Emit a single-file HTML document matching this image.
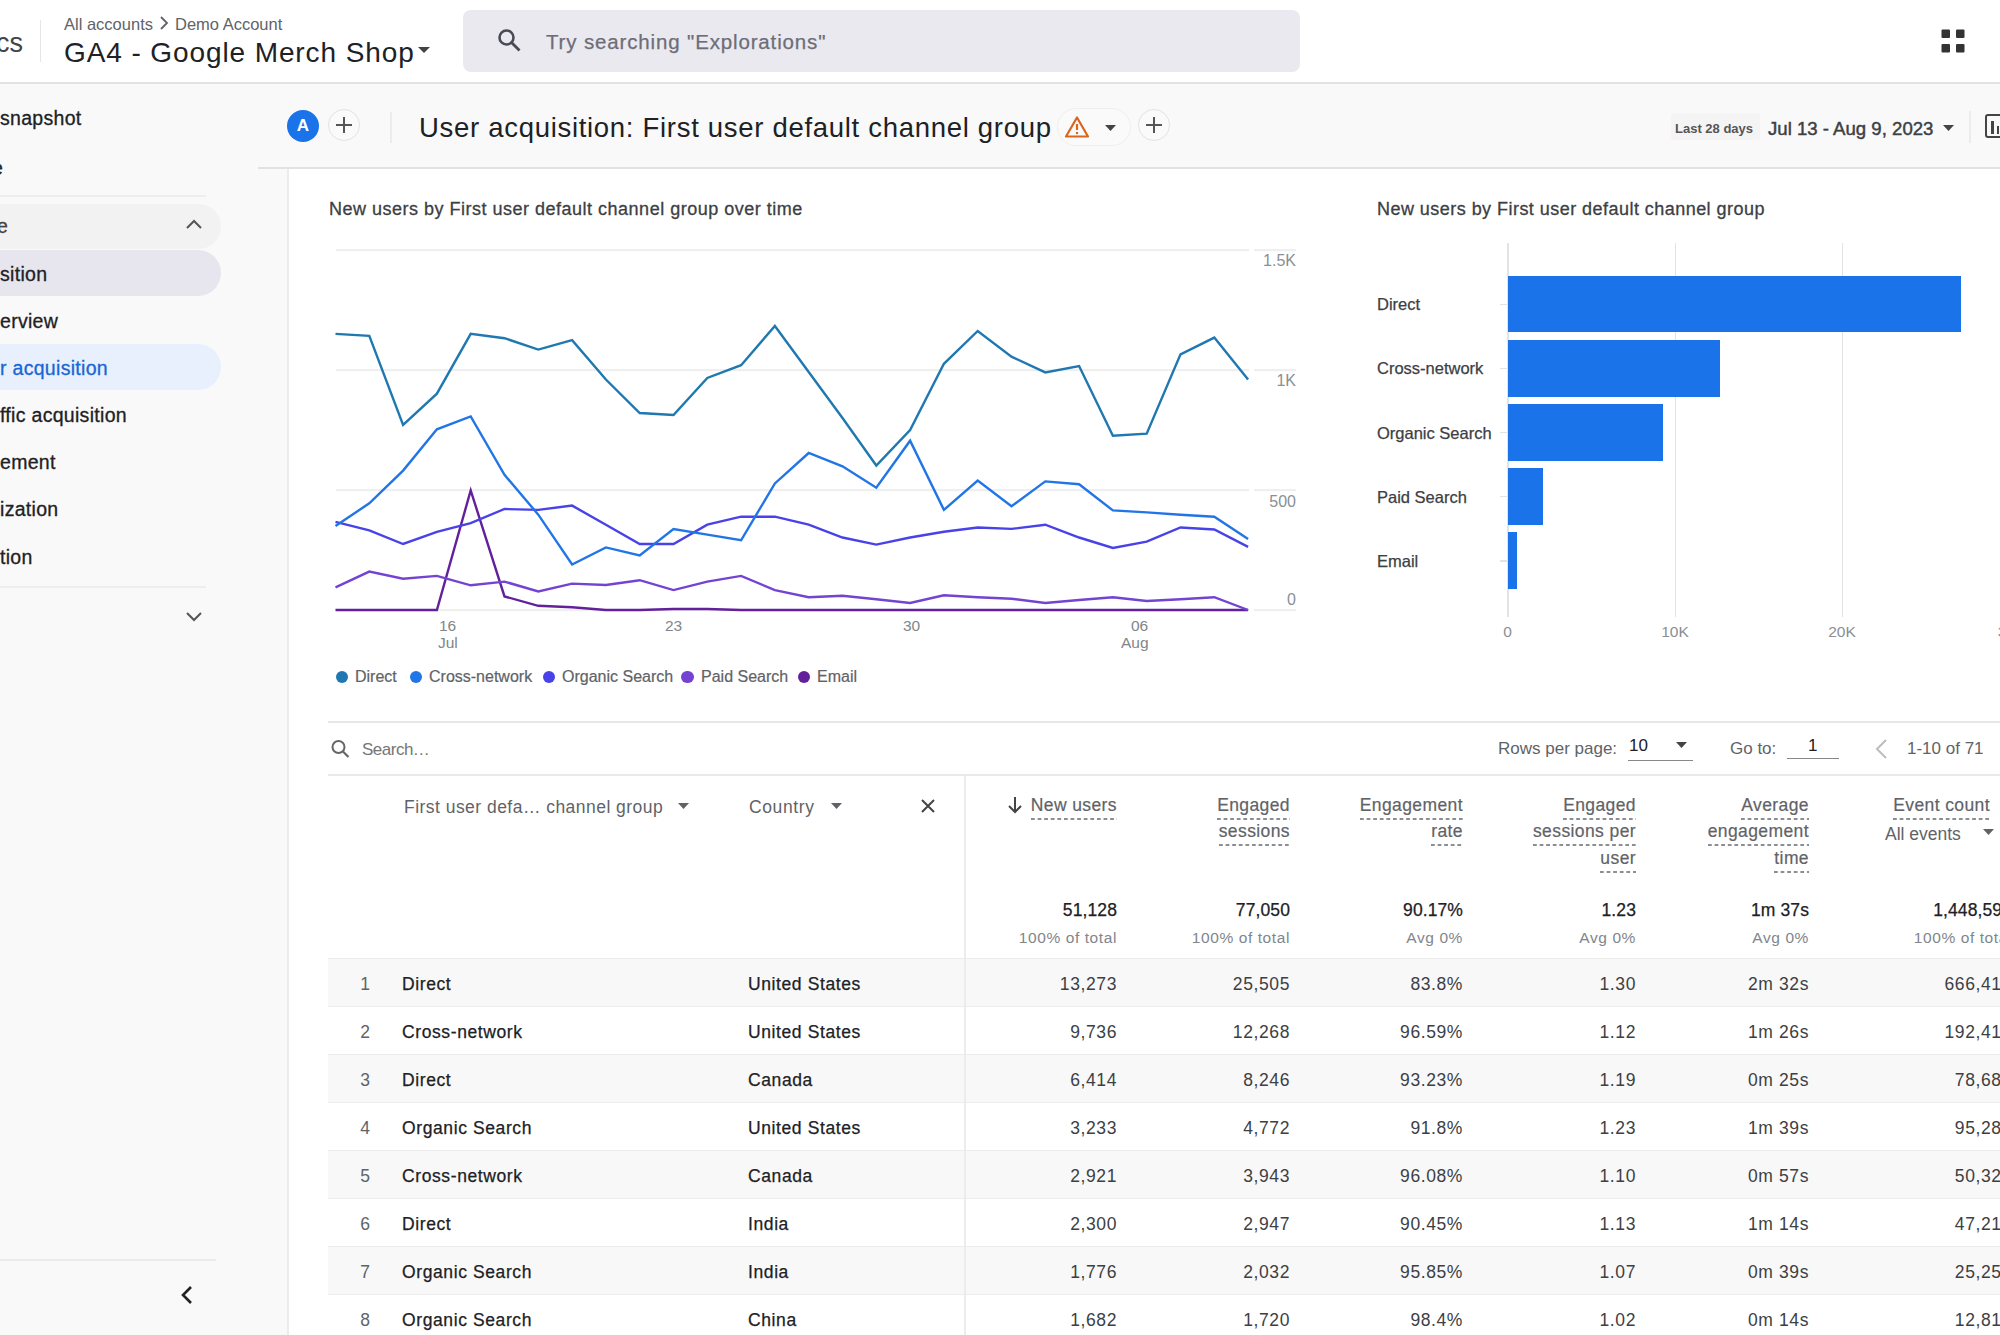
<!DOCTYPE html>
<html><head><meta charset="utf-8">
<style>
*{margin:0;padding:0;box-sizing:border-box}
html,body{width:2000px;height:1335px;overflow:hidden;background:#fff;font-family:"Liberation Sans",sans-serif;color:#202124}
.a{position:absolute;white-space:nowrap;line-height:1}
.r{text-align:right}
.m{-webkit-text-stroke:0.25px currentColor}
.th{position:absolute;white-space:nowrap;line-height:1;font-size:17.5px;color:#5f6368;text-align:right;letter-spacing:0.4px;-webkit-text-stroke:0.2px #5f6368}
.th span{background:linear-gradient(to right,#8a8f94 60%,transparent 60%) repeat-x 0 100%;background-size:6.6px 2px;padding-bottom:5px}
.cell{position:absolute;white-space:nowrap;line-height:1;font-size:17.5px;color:#202124;letter-spacing:0.6px}
</style></head><body>

<div class="a" style="left:0;top:82px;width:2000px;height:2px;background:#e2e2e2"></div>
<div class="a" style="left:-4px;top:30px;font-size:27px;color:#444">cs</div>
<div class="a" style="left:40px;top:20px;width:1px;height:42px;background:#e6e6e6"></div>
<div class="a" id="bc" style="left:64px;top:16px;font-size:16.5px;color:#5f6368">All accounts</div>
<svg class="a" style="left:158px;top:15px" width="12" height="16"><path d="M3 2 L9 8 L3 14" fill="none" stroke="#5f6368" stroke-width="1.8"/></svg>
<div class="a" id="bc2" style="left:175px;top:16px;font-size:16.5px;color:#5f6368">Demo Account</div>
<div class="a" id="prop" style="left:64px;top:39px;font-size:28px;color:#202124;letter-spacing:0.9px">GA4 - Google Merch Shop</div>
<svg class="a" style="left:417px;top:45px" width="14" height="10"><path d="M1 2 L13 2 L7 8 Z" fill="#444"/></svg>
<div class="a" style="left:463px;top:10px;width:837px;height:62px;background:#e9e9ef;border-radius:8px"></div>
<svg class="a" style="left:495px;top:26px" width="30" height="30"><circle cx="11.5" cy="11.5" r="7" fill="none" stroke="#4a4a55" stroke-width="2.6"/><path d="M16.5 16.5 L24.5 24.5" stroke="#4a4a55" stroke-width="2.8"/></svg>
<div class="a" id="ph" style="left:546px;top:32px;font-size:20.5px;color:#6d6d78;letter-spacing:0.85px;-webkit-text-stroke:0.25px #6d6d78">Try searching "Explorations"</div>
<svg class="a" style="left:1940px;top:28px" width="26" height="26"><rect x="1.5" y="1.5" width="8.5" height="8.5" rx="1" fill="#333"/><rect x="16" y="1.5" width="8.5" height="8.5" rx="1" fill="#333"/><rect x="1.5" y="16" width="8.5" height="8.5" rx="1" fill="#333"/><rect x="16" y="16" width="8.5" height="8.5" rx="1" fill="#333"/></svg>

<div class="a" style="left:0;top:84px;width:2000px;height:85px;background:#f9f9f9"></div>
<div class="a" style="left:0;top:84px;width:288px;height:1251px;background:#f9f9f9"></div>
<div class="a" style="left:258px;top:167px;width:1742px;height:2px;background:#e2e2e2"></div>
<div class="a" style="left:287px;top:169px;width:2px;height:1166px;background:#ececec"></div>

<div class="a" style="left:287px;top:110px;width:32px;height:32px;border-radius:50%;background:#1a73e8;color:#fff;font-size:17px;font-weight:bold;text-align:center;line-height:32px">A</div>
<div class="a" style="left:328px;top:109px;width:32px;height:32px;border-radius:50%;border:1.5px solid #e3e3e3;background:#fafafa"></div>
<svg class="a" style="left:334px;top:115px" width="20" height="20"><path d="M10 2 V18 M2 10 H18" stroke="#555" stroke-width="2"/></svg>
<div class="a" style="left:390px;top:112px;width:2px;height:31px;background:#ececec"></div>
<div class="a" id="title" style="left:419px;top:114px;font-size:27.5px;color:#202124;letter-spacing:0.7px">User acquisition: First user default channel group</div>
<div class="a" style="left:1057px;top:108px;width:74px;height:38px;border-radius:19px;border:1.5px solid #efefef;background:#fafafa"></div>
<svg class="a" style="left:1064px;top:115px" width="26" height="24"><path d="M13 2.5 L24 21.5 H2 Z" fill="none" stroke="#d9651f" stroke-width="2.2" stroke-linejoin="round"/><path d="M13 9 V15" stroke="#d9651f" stroke-width="2.2"/><circle cx="13" cy="18" r="1.2" fill="#d9651f"/></svg>
<svg class="a" style="left:1104px;top:124px" width="14" height="8"><path d="M1 1 H12 L6.5 7 Z" fill="#444"/></svg>
<div class="a" style="left:1138px;top:109px;width:32px;height:32px;border-radius:50%;border:1.5px solid #e3e3e3;background:#fafafa"></div>
<svg class="a" style="left:1144px;top:115px" width="20" height="20"><path d="M10 2 V18 M2 10 H18" stroke="#555" stroke-width="2"/></svg>
<div class="a" style="left:1671px;top:113px;width:89px;height:27px;background:#f4f4f4;border-radius:3px"></div>
<div class="a" id="l28" style="left:1675px;top:122px;font-size:13px;color:#555;font-weight:bold">Last 28 days</div>
<div class="a m" id="dr" style="left:1768px;top:120px;font-size:18.6px;color:#3c4043;-webkit-text-stroke:0.45px #3c4043">Jul 13 - Aug 9, 2023</div>
<svg class="a" style="left:1942px;top:124px" width="14" height="8"><path d="M1 1 H12 L6.5 7 Z" fill="#444"/></svg>
<div class="a" style="left:1969px;top:111px;width:2px;height:32px;background:#ececec"></div>
<div class="a" style="left:1985px;top:114px;width:24px;height:24px;border:2.5px solid #444;border-radius:3px"></div>
<div class="a" style="left:1991px;top:121px;width:2.5px;height:13px;background:#444"></div><div class="a" style="left:1996.5px;top:126px;width:2.5px;height:8px;background:#444"></div>

<div class="a" id="sb1" style="left:0;top:108.5px;font-size:19.5px;letter-spacing:0.3px;-webkit-text-stroke:0.3px currentColor;color:#202124">snapshot</div>
<div class="a" style="left:-8px;top:159px;font-size:19.5px;letter-spacing:0.3px;-webkit-text-stroke:0.3px currentColor;color:#202124">e</div>
<div class="a" style="left:0;top:195px;width:206px;height:2px;background:#eeeeee"></div>
<div class="a" style="left:0;top:204px;width:221px;height:45px;background:#f2f2f2;border-radius:0 23px 23px 0"></div>
<div class="a" style="left:-3px;top:216.5px;font-size:19.5px;letter-spacing:0.3px;-webkit-text-stroke:0.3px currentColor;color:#444">e</div>
<svg class="a" style="left:184px;top:217px" width="20" height="14"><path d="M3 11 L10 4 L17 11" fill="none" stroke="#555" stroke-width="2"/></svg>
<div class="a" style="left:0;top:250px;width:221px;height:46px;background:#e7e6ee;border-radius:0 23px 23px 0"></div>
<div class="a" id="sb2" style="left:0;top:265px;font-size:19.5px;letter-spacing:0.3px;-webkit-text-stroke:0.3px currentColor;color:#202124">sition</div>
<div class="a" id="sb3" style="left:0;top:312px;font-size:19.5px;letter-spacing:0.3px;-webkit-text-stroke:0.3px currentColor;color:#202124">erview</div>
<div class="a" style="left:0;top:344px;width:221px;height:46px;background:#e8f0fe;border-radius:0 23px 23px 0"></div>
<div class="a" id="sb4" style="left:0;top:359px;font-size:19.5px;letter-spacing:0.3px;-webkit-text-stroke:0.3px currentColor;color:#1967d2">r acquisition</div>
<div class="a" id="sb5" style="left:0;top:406px;font-size:19.5px;letter-spacing:0.3px;-webkit-text-stroke:0.3px currentColor;color:#202124">ffic acquisition</div>
<div class="a" id="sb6" style="left:0;top:453px;font-size:19.5px;letter-spacing:0.3px;-webkit-text-stroke:0.3px currentColor;color:#202124">ement</div>
<div class="a" id="sb7" style="left:0;top:500px;font-size:19.5px;letter-spacing:0.3px;-webkit-text-stroke:0.3px currentColor;color:#202124">ization</div>
<div class="a" id="sb8" style="left:0;top:548px;font-size:19.5px;letter-spacing:0.3px;-webkit-text-stroke:0.3px currentColor;color:#202124">tion</div>
<div class="a" style="left:0;top:586px;width:206px;height:2px;background:#eeeeee"></div>
<svg class="a" style="left:184px;top:610px" width="20" height="14"><path d="M3 3 L10 10 L17 3" fill="none" stroke="#555" stroke-width="2"/></svg>
<div class="a" style="left:0;top:1259px;width:216px;height:2px;background:#ebebeb"></div>
<svg class="a" style="left:177px;top:1284px" width="20" height="22"><path d="M14 3 L6 11 L14 19" fill="none" stroke="#222" stroke-width="2.6"/></svg>

<div class="a" id="ct1" style="left:329px;top:200px;font-size:18px;color:#3c4043;letter-spacing:0.5px;-webkit-text-stroke:0.3px #3c4043">New users by First user default channel group over time</div>
<svg class="a" style="left:0;top:0" width="2000" height="700">
<rect x="336" y="249" width="913" height="2.2" fill="#efefef"/><rect x="1254" y="249" width="42" height="2.2" fill="#efefef"/>
<rect x="336" y="369" width="913" height="2.2" fill="#efefef"/><rect x="1254" y="369" width="42" height="2.2" fill="#efefef"/>
<rect x="336" y="489" width="913" height="2.2" fill="#efefef"/><rect x="1254" y="489" width="42" height="2.2" fill="#efefef"/>
<rect x="336" y="609" width="913" height="2.2" fill="#efefef"/><rect x="1254" y="609" width="42" height="2.2" fill="#efefef"/>
<polyline points="335.5,610.0 369.3,610.0 403.1,610.0 436.9,610.0 470.7,490.5 504.5,596.4 538.3,605.8 572.1,607.2 605.9,610.0 639.7,610.0 673.5,609.0 707.3,609.0 741.1,610.0 774.9,610.0 808.7,610.0 842.5,610.0 876.3,610.0 910.1,610.0 943.9,610.0 977.7,610.0 1011.5,610.0 1045.3,610.0 1079.1,610.0 1112.9,610.0 1146.7,610.0 1180.5,610.0 1214.3,610.0 1248.1,610.0" fill="none" stroke="#62219a" stroke-width="2.4" stroke-linejoin="miter"/>
<polyline points="335.5,587.3 369.3,571.6 403.1,578.7 436.9,575.9 470.7,585.3 504.5,581.6 538.3,591.5 572.1,583.6 605.9,585.0 639.7,580.2 673.5,590.1 707.3,581.6 741.1,575.9 774.9,590.1 808.7,597.2 842.5,595.8 876.3,599.2 910.1,603.0 943.9,595.3 977.7,597.2 1011.5,598.7 1045.3,603.0 1079.1,600.0 1112.9,597.2 1146.7,601.0 1180.5,599.2 1214.3,597.2 1248.1,610.0" fill="none" stroke="#7443d2" stroke-width="2.4" stroke-linejoin="miter"/>
<polyline points="335.5,521.8 369.3,530.4 403.1,544.0 436.9,531.8 470.7,523.2 504.5,509.0 538.3,509.9 572.1,505.6 605.9,524.7 639.7,544.0 673.5,544.0 707.3,524.7 741.1,516.7 774.9,516.7 808.7,524.7 842.5,537.5 876.3,544.6 910.1,537.5 943.9,531.8 977.7,527.5 1011.5,528.9 1045.3,524.7 1079.1,537.5 1112.9,548.0 1146.7,541.7 1180.5,527.5 1214.3,529.5 1248.1,546.9" fill="none" stroke="#4842e8" stroke-width="2.4" stroke-linejoin="miter"/>
<polyline points="335.5,526.0 369.3,503.3 403.1,470.6 436.9,429.3 470.7,416.5 504.5,474.8 538.3,514.7 572.1,564.5 605.9,547.4 639.7,555.4 673.5,529.0 707.3,534.6 741.1,540.3 774.9,483.4 808.7,453.0 842.5,466.3 876.3,487.7 910.1,440.7 943.9,509.9 977.7,480.5 1011.5,506.2 1045.3,481.4 1079.1,484.2 1112.9,510.4 1146.7,512.4 1180.5,514.7 1214.3,516.7 1248.1,538.9" fill="none" stroke="#2275e6" stroke-width="2.4" stroke-linejoin="miter"/>
<polyline points="335.5,333.9 369.3,335.9 403.1,425.0 436.9,393.7 470.7,333.9 504.5,338.2 538.3,349.6 572.1,340.2 605.9,379.5 639.7,413.0 673.5,415.0 707.3,378.0 741.1,365.2 774.9,326.0 808.7,372.0 842.5,418.0 876.3,465.5 910.1,430.0 943.9,363.8 977.7,331.0 1011.5,356.7 1045.3,372.4 1079.1,366.1 1112.9,435.8 1146.7,433.6 1180.5,354.4 1214.3,337.6 1248.1,379.5" fill="none" stroke="#1f78b0" stroke-width="2.4" stroke-linejoin="miter"/>
</svg>
<div class="a r" id="ya254" style="left:1196px;width:100px;top:253px;font-size:16px;color:#8a8f94">1.5K</div>
<div class="a r" id="ya374" style="left:1196px;width:100px;top:373px;font-size:16px;color:#8a8f94">1K</div>
<div class="a r" id="ya495" style="left:1196px;width:100px;top:494px;font-size:16px;color:#8a8f94">500</div>
<div class="a r" id="ya593" style="left:1196px;width:100px;top:592px;font-size:16px;color:#8a8f94">0</div>
<div class="a" id="xa1" style="left:439px;top:617.5px;font-size:15.5px;color:#80868b">16</div>
<div class="a" id="xa2" style="left:438px;top:634.5px;font-size:15.5px;color:#80868b">Jul</div>
<div class="a" id="xa3" style="left:665px;top:617.5px;font-size:15.5px;color:#80868b">23</div>
<div class="a" id="xa4" style="left:903px;top:617.5px;font-size:15.5px;color:#80868b">30</div>
<div class="a" id="xa5" style="left:1131px;top:617.5px;font-size:15.5px;color:#80868b">06</div>
<div class="a" id="xa6" style="left:1121px;top:634.5px;font-size:15.5px;color:#80868b">Aug</div>

<div class="a" style="left:335.8px;top:670.8px;width:12.4px;height:12.4px;border-radius:50%;background:#1f78b0"></div>
<div class="a" id="lg0" style="left:355px;top:669px;font-size:16px;color:#5f6368;-webkit-text-stroke:0.2px #5f6368">Direct</div>
<div class="a" style="left:409.8px;top:670.8px;width:12.4px;height:12.4px;border-radius:50%;background:#2275e6"></div>
<div class="a" id="lg1" style="left:429px;top:669px;font-size:16px;color:#5f6368;-webkit-text-stroke:0.2px #5f6368">Cross-network</div>
<div class="a" style="left:542.8px;top:670.8px;width:12.4px;height:12.4px;border-radius:50%;background:#4842e8"></div>
<div class="a" id="lg2" style="left:562px;top:669px;font-size:16px;color:#5f6368;-webkit-text-stroke:0.2px #5f6368">Organic Search</div>
<div class="a" style="left:681.3px;top:670.8px;width:12.4px;height:12.4px;border-radius:50%;background:#7443d2"></div>
<div class="a" id="lg3" style="left:701px;top:669px;font-size:16px;color:#5f6368;-webkit-text-stroke:0.2px #5f6368">Paid Search</div>
<div class="a" style="left:797.8px;top:670.8px;width:12.4px;height:12.4px;border-radius:50%;background:#62219a"></div>
<div class="a" id="lg4" style="left:817px;top:669px;font-size:16px;color:#5f6368;-webkit-text-stroke:0.2px #5f6368">Email</div>
<div class="a" id="ct2" style="left:1377px;top:200px;font-size:18px;color:#3c4043;letter-spacing:0.46px;-webkit-text-stroke:0.3px #3c4043">New users by First user default channel group</div>
<div class="a" style="left:1507px;top:243px;width:1.5px;height:374px;background:#e3e3e3"></div>
<div class="a" style="left:1674.5px;top:243px;width:1.5px;height:374px;background:#e3e3e3"></div>
<div class="a" style="left:1841.5px;top:243px;width:1.5px;height:374px;background:#e3e3e3"></div>
<div class="a" style="left:1507.5px;top:275.6px;width:453.0px;height:56.8px;background:#1a73e8"></div>
<div class="a" style="left:1500px;top:303.6px;width:7px;height:1.2px;background:#e3e3e3"></div>
<div class="a" id="bl0" style="left:1377px;top:296.1px;font-size:16.5px;color:#3c4043;-webkit-text-stroke:0.25px #3c4043">Direct</div>
<div class="a" style="left:1507.5px;top:339.8px;width:212.8px;height:56.8px;background:#1a73e8"></div>
<div class="a" style="left:1500px;top:367.8px;width:7px;height:1.2px;background:#e3e3e3"></div>
<div class="a" id="bl1" style="left:1377px;top:360.3px;font-size:16.5px;color:#3c4043;-webkit-text-stroke:0.25px #3c4043">Cross-network</div>
<div class="a" style="left:1507.5px;top:404.0px;width:155.3px;height:56.8px;background:#1a73e8"></div>
<div class="a" style="left:1500px;top:432.0px;width:7px;height:1.2px;background:#e3e3e3"></div>
<div class="a" id="bl2" style="left:1377px;top:424.5px;font-size:16.5px;color:#3c4043;-webkit-text-stroke:0.25px #3c4043">Organic Search</div>
<div class="a" style="left:1507.5px;top:468.2px;width:35.2px;height:56.8px;background:#1a73e8"></div>
<div class="a" style="left:1500px;top:496.2px;width:7px;height:1.2px;background:#e3e3e3"></div>
<div class="a" id="bl3" style="left:1377px;top:488.7px;font-size:16.5px;color:#3c4043;-webkit-text-stroke:0.25px #3c4043">Paid Search</div>
<div class="a" style="left:1507.5px;top:532.4px;width:9.3px;height:56.8px;background:#1a73e8"></div>
<div class="a" style="left:1500px;top:560.4px;width:7px;height:1.2px;background:#e3e3e3"></div>
<div class="a" id="bl4" style="left:1377px;top:552.9px;font-size:16.5px;color:#3c4043;-webkit-text-stroke:0.25px #3c4043">Email</div>
<div class="a" style="left:1467.5px;width:80px;text-align:center;top:623.5px;font-size:15.5px;color:#8a8f94">0</div>
<div class="a" style="left:1635px;width:80px;text-align:center;top:623.5px;font-size:15.5px;color:#8a8f94">10K</div>
<div class="a" style="left:1802px;width:80px;text-align:center;top:623.5px;font-size:15.5px;color:#8a8f94">20K</div>
<div class="a" style="left:1962px;width:80px;text-align:center;top:623.5px;font-size:15.5px;color:#8a8f94">3</div>
<div class="a" style="left:328px;top:721px;width:1672px;height:1.6px;background:#e6e6e6"></div>
<svg class="a" style="left:328px;top:736px" width="26" height="26"><circle cx="10.5" cy="11" r="6" fill="none" stroke="#666" stroke-width="2"/><path d="M15 15.5 L20.5 21" stroke="#666" stroke-width="2.2"/></svg>
<div class="a" id="srch" style="left:362px;top:741px;font-size:17px;letter-spacing:-0.5px;color:#757575">Search…</div>
<div class="a" id="rpp" style="left:1498px;top:740px;font-size:17px;color:#5f6368">Rows per page:</div>
<div class="a" style="left:1629px;top:737px;font-size:17px;color:#202124">10</div>
<svg class="a" style="left:1675px;top:741px" width="14" height="8"><path d="M1 1 H12 L6.5 7 Z" fill="#444"/></svg>
<div class="a" style="left:1628px;top:760px;width:65px;height:1.3px;background:#888"></div>
<div class="a" id="goto" style="left:1730px;top:740px;font-size:17px;color:#5f6368">Go to:</div>
<div class="a" style="left:1808px;top:737px;font-size:17px;color:#202124">1</div>
<div class="a" style="left:1787px;top:758px;width:52px;height:1.3px;background:#888"></div>
<svg class="a" style="left:1872px;top:738px" width="18" height="22"><path d="M14 2 L5 11 L14 20" fill="none" stroke="#bdbdbd" stroke-width="2"/></svg>
<div class="a" id="pg" style="left:1907px;top:740px;font-size:17px;color:#5f6368">1-10 of 71</div>
<div class="a" style="left:328px;top:774px;width:1672px;height:1.6px;background:#e9e9e9"></div>
<div class="a" style="left:964px;top:775px;width:2px;height:560px;background:#ececec"></div>
<div class="a" id="h1" style="left:404px;top:799px;font-size:17.5px;color:#5f6368;letter-spacing:0.47px">First user defa… channel group</div>
<svg class="a" style="left:677px;top:802px" width="14" height="8"><path d="M1 1 H12 L6.5 7 Z" fill="#5f6368"/></svg>
<div class="a" id="h2" style="left:749px;top:799px;font-size:17.5px;color:#5f6368;letter-spacing:0.6px">Country</div>
<svg class="a" style="left:830px;top:802px" width="14" height="8"><path d="M1 1 H12 L6.5 7 Z" fill="#5f6368"/></svg>
<svg class="a" style="left:920px;top:798px" width="16" height="16"><path d="M2 2 L14 14 M14 2 L2 14" stroke="#444" stroke-width="2"/></svg>
<svg class="a" style="left:1006px;top:795px" width="18" height="20"><path d="M9 2 V17 M3 11 L9 17 L15 11" fill="none" stroke="#444" stroke-width="2"/></svg>
<div class="th" style="left:817px;width:300px;top:797.0px"><span id="th0_0">New users</span></div>
<div class="th" style="left:990px;width:300px;top:797.0px"><span id="th1_0">Engaged</span></div>
<div class="th" style="left:990px;width:300px;top:823.4px"><span id="th1_1">sessions</span></div>
<div class="th" style="left:1163px;width:300px;top:797.0px"><span id="th2_0">Engagement</span></div>
<div class="th" style="left:1163px;width:300px;top:823.4px"><span id="th2_1">rate</span></div>
<div class="th" style="left:1336px;width:300px;top:797.0px"><span id="th3_0">Engaged</span></div>
<div class="th" style="left:1336px;width:300px;top:823.4px"><span id="th3_1">sessions per</span></div>
<div class="th" style="left:1336px;width:300px;top:849.8px"><span id="th3_2">user</span></div>
<div class="th" style="left:1509px;width:300px;top:797.0px"><span id="th4_0">Average</span></div>
<div class="th" style="left:1509px;width:300px;top:823.4px"><span id="th4_1">engagement</span></div>
<div class="th" style="left:1509px;width:300px;top:849.8px"><span id="th4_2">time</span></div>
<div class="th" style="left:1690px;width:300px;top:797.0px"><span id="th5_0">Event count</span></div>
<div class="a" style="left:1885px;top:826px;font-size:17.5px;color:#5f6368">All events</div>
<svg class="a" style="left:1982px;top:828px" width="14" height="8"><path d="M1 1 H12 L6.5 7 Z" fill="#5f6368"/></svg>
<div class="cell m r" id="tot0" style="left:817px;width:300px;top:902px;letter-spacing:0.1px">51,128</div>
<div class="cell r" id="sub0" style="left:817px;width:300px;top:930px;font-size:15.5px;color:#80868b">100% of total</div>
<div class="cell m r" id="tot1" style="left:990px;width:300px;top:902px;letter-spacing:0.1px">77,050</div>
<div class="cell r" id="sub1" style="left:990px;width:300px;top:930px;font-size:15.5px;color:#80868b">100% of total</div>
<div class="cell m r" id="tot2" style="left:1163px;width:300px;top:902px;letter-spacing:0.1px">90.17%</div>
<div class="cell r" id="sub2" style="left:1163px;width:300px;top:930px;font-size:15.5px;color:#80868b">Avg 0%</div>
<div class="cell m r" id="tot3" style="left:1336px;width:300px;top:902px;letter-spacing:0.1px">1.23</div>
<div class="cell r" id="sub3" style="left:1336px;width:300px;top:930px;font-size:15.5px;color:#80868b">Avg 0%</div>
<div class="cell m r" id="tot4" style="left:1509px;width:300px;top:902px;letter-spacing:0.1px">1m 37s</div>
<div class="cell r" id="sub4" style="left:1509px;width:300px;top:930px;font-size:15.5px;color:#80868b">Avg 0%</div>
<div class="cell m r" id="tot5" style="left:1712px;width:300px;top:902px;letter-spacing:0.1px">1,448,592</div>
<div class="cell r" id="sub5" style="left:1712px;width:300px;top:930px;font-size:15.5px;color:#80868b">100% of total</div>
<div class="a" style="left:328px;top:958px;width:1672px;height:1.5px;background:#ececec"></div>
<div class="a" style="left:328px;top:959px;width:636px;height:47px;background:#f8f8f8"></div>
<div class="a" style="left:966px;top:959px;width:1034px;height:47px;background:#f8f8f8"></div>
<div class="a" style="left:328px;top:1006px;width:1672px;height:1px;background:#ececec"></div>
<div class="cell r" id="rn0" style="left:301.5px;width:69px;top:976px;color:#5f6368">1</div>
<div class="cell m" id="rl0" style="left:402px;top:976px">Direct</div>
<div class="cell m" id="rc0" style="left:748px;top:976px">United States</div>
<div class="cell r" id="v0_0" style="left:817px;width:300px;top:976px;color:#3c4043">13,273</div>
<div class="cell r" id="v0_1" style="left:990px;width:300px;top:976px;color:#3c4043">25,505</div>
<div class="cell r" id="v0_2" style="left:1163px;width:300px;top:976px;color:#3c4043">83.8%</div>
<div class="cell r" id="v0_3" style="left:1336px;width:300px;top:976px;color:#3c4043">1.30</div>
<div class="cell r" id="v0_4" style="left:1509px;width:300px;top:976px;color:#3c4043">2m 32s</div>
<div class="cell r" id="v0_5" style="left:1712px;width:300px;top:976px;color:#3c4043">666,410</div>
<div class="a" style="left:328px;top:1054px;width:1672px;height:1px;background:#ececec"></div>
<div class="cell r" id="rn1" style="left:301.5px;width:69px;top:1024px;color:#5f6368">2</div>
<div class="cell m" id="rl1" style="left:402px;top:1024px">Cross-network</div>
<div class="cell m" id="rc1" style="left:748px;top:1024px">United States</div>
<div class="cell r" id="v1_0" style="left:817px;width:300px;top:1024px;color:#3c4043">9,736</div>
<div class="cell r" id="v1_1" style="left:990px;width:300px;top:1024px;color:#3c4043">12,268</div>
<div class="cell r" id="v1_2" style="left:1163px;width:300px;top:1024px;color:#3c4043">96.59%</div>
<div class="cell r" id="v1_3" style="left:1336px;width:300px;top:1024px;color:#3c4043">1.12</div>
<div class="cell r" id="v1_4" style="left:1509px;width:300px;top:1024px;color:#3c4043">1m 26s</div>
<div class="cell r" id="v1_5" style="left:1712px;width:300px;top:1024px;color:#3c4043">192,410</div>
<div class="a" style="left:328px;top:1055px;width:636px;height:47px;background:#f8f8f8"></div>
<div class="a" style="left:966px;top:1055px;width:1034px;height:47px;background:#f8f8f8"></div>
<div class="a" style="left:328px;top:1102px;width:1672px;height:1px;background:#ececec"></div>
<div class="cell r" id="rn2" style="left:301.5px;width:69px;top:1072px;color:#5f6368">3</div>
<div class="cell m" id="rl2" style="left:402px;top:1072px">Direct</div>
<div class="cell m" id="rc2" style="left:748px;top:1072px">Canada</div>
<div class="cell r" id="v2_0" style="left:817px;width:300px;top:1072px;color:#3c4043">6,414</div>
<div class="cell r" id="v2_1" style="left:990px;width:300px;top:1072px;color:#3c4043">8,246</div>
<div class="cell r" id="v2_2" style="left:1163px;width:300px;top:1072px;color:#3c4043">93.23%</div>
<div class="cell r" id="v2_3" style="left:1336px;width:300px;top:1072px;color:#3c4043">1.19</div>
<div class="cell r" id="v2_4" style="left:1509px;width:300px;top:1072px;color:#3c4043">0m 25s</div>
<div class="cell r" id="v2_5" style="left:1712px;width:300px;top:1072px;color:#3c4043">78,680</div>
<div class="a" style="left:328px;top:1150px;width:1672px;height:1px;background:#ececec"></div>
<div class="cell r" id="rn3" style="left:301.5px;width:69px;top:1120px;color:#5f6368">4</div>
<div class="cell m" id="rl3" style="left:402px;top:1120px">Organic Search</div>
<div class="cell m" id="rc3" style="left:748px;top:1120px">United States</div>
<div class="cell r" id="v3_0" style="left:817px;width:300px;top:1120px;color:#3c4043">3,233</div>
<div class="cell r" id="v3_1" style="left:990px;width:300px;top:1120px;color:#3c4043">4,772</div>
<div class="cell r" id="v3_2" style="left:1163px;width:300px;top:1120px;color:#3c4043">91.8%</div>
<div class="cell r" id="v3_3" style="left:1336px;width:300px;top:1120px;color:#3c4043">1.23</div>
<div class="cell r" id="v3_4" style="left:1509px;width:300px;top:1120px;color:#3c4043">1m 39s</div>
<div class="cell r" id="v3_5" style="left:1712px;width:300px;top:1120px;color:#3c4043">95,280</div>
<div class="a" style="left:328px;top:1151px;width:636px;height:47px;background:#f8f8f8"></div>
<div class="a" style="left:966px;top:1151px;width:1034px;height:47px;background:#f8f8f8"></div>
<div class="a" style="left:328px;top:1198px;width:1672px;height:1px;background:#ececec"></div>
<div class="cell r" id="rn4" style="left:301.5px;width:69px;top:1168px;color:#5f6368">5</div>
<div class="cell m" id="rl4" style="left:402px;top:1168px">Cross-network</div>
<div class="cell m" id="rc4" style="left:748px;top:1168px">Canada</div>
<div class="cell r" id="v4_0" style="left:817px;width:300px;top:1168px;color:#3c4043">2,921</div>
<div class="cell r" id="v4_1" style="left:990px;width:300px;top:1168px;color:#3c4043">3,943</div>
<div class="cell r" id="v4_2" style="left:1163px;width:300px;top:1168px;color:#3c4043">96.08%</div>
<div class="cell r" id="v4_3" style="left:1336px;width:300px;top:1168px;color:#3c4043">1.10</div>
<div class="cell r" id="v4_4" style="left:1509px;width:300px;top:1168px;color:#3c4043">0m 57s</div>
<div class="cell r" id="v4_5" style="left:1712px;width:300px;top:1168px;color:#3c4043">50,320</div>
<div class="a" style="left:328px;top:1246px;width:1672px;height:1px;background:#ececec"></div>
<div class="cell r" id="rn5" style="left:301.5px;width:69px;top:1216px;color:#5f6368">6</div>
<div class="cell m" id="rl5" style="left:402px;top:1216px">Direct</div>
<div class="cell m" id="rc5" style="left:748px;top:1216px">India</div>
<div class="cell r" id="v5_0" style="left:817px;width:300px;top:1216px;color:#3c4043">2,300</div>
<div class="cell r" id="v5_1" style="left:990px;width:300px;top:1216px;color:#3c4043">2,947</div>
<div class="cell r" id="v5_2" style="left:1163px;width:300px;top:1216px;color:#3c4043">90.45%</div>
<div class="cell r" id="v5_3" style="left:1336px;width:300px;top:1216px;color:#3c4043">1.13</div>
<div class="cell r" id="v5_4" style="left:1509px;width:300px;top:1216px;color:#3c4043">1m 14s</div>
<div class="cell r" id="v5_5" style="left:1712px;width:300px;top:1216px;color:#3c4043">47,210</div>
<div class="a" style="left:328px;top:1247px;width:636px;height:47px;background:#f8f8f8"></div>
<div class="a" style="left:966px;top:1247px;width:1034px;height:47px;background:#f8f8f8"></div>
<div class="a" style="left:328px;top:1294px;width:1672px;height:1px;background:#ececec"></div>
<div class="cell r" id="rn6" style="left:301.5px;width:69px;top:1264px;color:#5f6368">7</div>
<div class="cell m" id="rl6" style="left:402px;top:1264px">Organic Search</div>
<div class="cell m" id="rc6" style="left:748px;top:1264px">India</div>
<div class="cell r" id="v6_0" style="left:817px;width:300px;top:1264px;color:#3c4043">1,776</div>
<div class="cell r" id="v6_1" style="left:990px;width:300px;top:1264px;color:#3c4043">2,032</div>
<div class="cell r" id="v6_2" style="left:1163px;width:300px;top:1264px;color:#3c4043">95.85%</div>
<div class="cell r" id="v6_3" style="left:1336px;width:300px;top:1264px;color:#3c4043">1.07</div>
<div class="cell r" id="v6_4" style="left:1509px;width:300px;top:1264px;color:#3c4043">0m 39s</div>
<div class="cell r" id="v6_5" style="left:1712px;width:300px;top:1264px;color:#3c4043">25,250</div>
<div class="a" style="left:328px;top:1342px;width:1672px;height:1px;background:#ececec"></div>
<div class="cell r" id="rn7" style="left:301.5px;width:69px;top:1312px;color:#5f6368">8</div>
<div class="cell m" id="rl7" style="left:402px;top:1312px">Organic Search</div>
<div class="cell m" id="rc7" style="left:748px;top:1312px">China</div>
<div class="cell r" id="v7_0" style="left:817px;width:300px;top:1312px;color:#3c4043">1,682</div>
<div class="cell r" id="v7_1" style="left:990px;width:300px;top:1312px;color:#3c4043">1,720</div>
<div class="cell r" id="v7_2" style="left:1163px;width:300px;top:1312px;color:#3c4043">98.4%</div>
<div class="cell r" id="v7_3" style="left:1336px;width:300px;top:1312px;color:#3c4043">1.02</div>
<div class="cell r" id="v7_4" style="left:1509px;width:300px;top:1312px;color:#3c4043">0m 14s</div>
<div class="cell r" id="v7_5" style="left:1712px;width:300px;top:1312px;color:#3c4043">12,810</div>
</body></html>
